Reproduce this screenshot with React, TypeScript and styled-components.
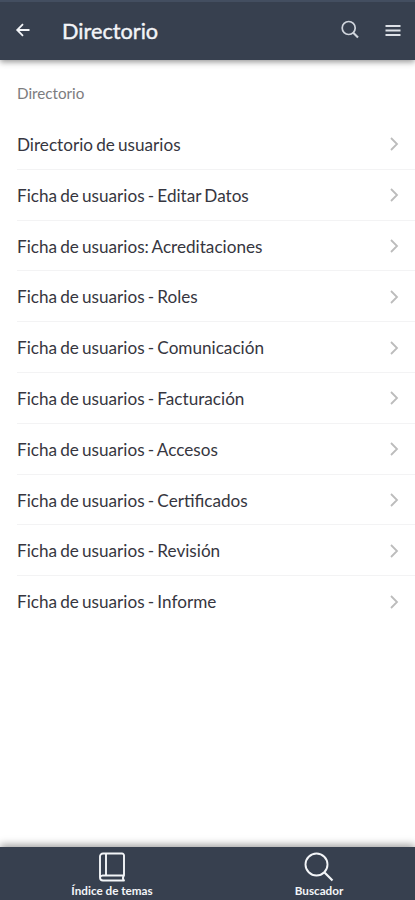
import React from "react";
import styled, { createGlobalStyle } from "styled-components";

const GlobalStyle = createGlobalStyle`
  * { box-sizing: border-box; }
  body { margin: 0; background: #fff; font-family: Lato, sans-serif; }
`;

const Screen = styled.div`
  display: flex;
  flex-direction: column;
  height: 900px;
  overflow: hidden;
  background: #fff;
`;

const Header = styled.header`
  display: flex;
  align-items: center;
  flex: none;
  height: 60px;
  padding: 0 14px 2px 15px;
  background: #37404f;
  border-top: 2px solid #434e60;
  box-shadow: 0 2px 6px rgba(0, 0, 0, 0.42);
  color: #f3f5f8;
`;

const Title = styled.h1`
  flex: 1;
  margin: 0 0 0 31px;
  padding-top: 2px;
  font-size: 21.7px;
  line-height: 28px;
  font-weight: 400;
  -webkit-text-stroke: 0.4px currentColor;
`;

const IconButton = styled.button<{ $gap?: number }>`
  display: flex;
  padding: 0;
  border: 0;
  margin-left: ${(p) => p.$gap ?? 0}px;
  background: none;
  color: inherit;
`;

const Main = styled.main`
  flex: 1;
  min-height: 0;
  padding-top: 23px;
`;

const SectionLabel = styled.h2`
  margin: 0 0 0 17px;
  height: 36px;
  font-size: 15.2px;
  line-height: 20px;
  font-weight: 400;
  color: #7c7c7e;
`;

const List = styled.ul`
  margin: 0;
  padding: 0 0 0 17px;
  list-style: none;
`;

const Row = styled.li`
  display: flex;
  align-items: center;
  justify-content: space-between;
  height: 50.8px;
  padding: 1.2px 16px 0 0;
  border-bottom: 1px solid #f3f3f4;
  font-size: 17.15px;
  word-spacing: -1.2px;
  color: #363640;
  &:last-child { border-bottom-color: transparent; }
`;

const TabBar = styled.nav`
  display: grid;
  grid-template-columns: 207px 207px;
  flex: none;
  height: 53px;
  padding-left: 8.5px;
  background: #37404f;
  box-shadow: 0 -2px 8px rgba(0, 0, 0, 0.4);
  color: #f3f5f8;
`;

const Tab = styled.a`
  display: flex;
  flex-direction: column;
  align-items: center;
  padding-top: 5px;
  font-size: 11.7px;
  line-height: 14px;
  font-weight: 700;
  gap: 1px;
`;

const ITEMS = [
  "Directorio de usuarios",
  "Ficha de usuarios - Editar Datos",
  "Ficha de usuarios: Acreditaciones",
  "Ficha de usuarios - Roles",
  "Ficha de usuarios - Comunicación",
  "Ficha de usuarios - Facturación",
  "Ficha de usuarios - Accesos",
  "Ficha de usuarios - Certificados",
  "Ficha de usuarios - Revisión",
  "Ficha de usuarios - Informe",
];

const BackIcon = () => (
  <svg width="16" height="16" viewBox="0 0 16 16" fill="none" stroke="currentColor" strokeWidth="1.8">
    <path d="M8 2.200 2.200 8 8 13.800M2.200 8H14.500" />
  </svg>
);

const SmallSearchIcon = () => (
  <svg width="20" height="20" viewBox="0 0 20 20" fill="none" stroke="#d0d5dd" strokeWidth="1.7">
    <circle cx="8.700" cy="8" r="6.500" />
    <path d="m13 12.500 5 5" strokeWidth="2.100" />
  </svg>
);

const MenuIcon = () => (
  <svg width="16" height="14" viewBox="0 0 16 14" stroke="#dde1e7" strokeWidth="2">
    <path d="M.5 3h15M.5 7.500h15M.5 12h15" />
  </svg>
);

const Chevron = () => (
  <svg width="10" height="16" viewBox="0 0 10 16" fill="none" stroke="#bcbcbc" strokeWidth="1.800">
    <path d="m2 2 6 6-6 6" />
  </svg>
);

const BookIcon = () => (
  <svg width="28" height="30" viewBox="0 0 28 30" fill="none" stroke="currentColor" strokeWidth="1.900" strokeLinejoin="round">
    <path d="M26 23.500V3.500a2 2 0 0 0-2-2H5a3 3 0 0 0-3 3V25.500a3 3 0 0 0 3 3H26c-1.300-1.500-1.300-3.500 0-5H5a3 3 0 0 0-3 2M8 1.500v22" />
  </svg>
);

const SearchIcon = () => (
  <svg width="30" height="30" viewBox="0 0 30 30" fill="none" stroke="currentColor" strokeWidth="1.900">
    <circle cx="12.500" cy="12.500" r="11" />
    <path d="m20.300 20.300 8.200 8.200" strokeWidth="2.200" />
  </svg>
);

export default function App() {
  return (
    <Screen>
      <GlobalStyle />
      <Header>
        <IconButton aria-label="Volver"><BackIcon /></IconButton>
        <Title>Directorio</Title>
        <IconButton aria-label="Buscar"><SmallSearchIcon /></IconButton>
        <IconButton aria-label="Menú" $gap={25}><MenuIcon /></IconButton>
      </Header>
      <Main>
        <SectionLabel>Directorio</SectionLabel>
        <List>
          {ITEMS.map((item) => (
            <Row key={item}>
              <span>{item}</span>
              <Chevron />
            </Row>
          ))}
        </List>
      </Main>
      <TabBar>
        <Tab><BookIcon />Índice de temas</Tab>
        <Tab><SearchIcon />Buscador</Tab>
      </TabBar>
    </Screen>
  );
}
